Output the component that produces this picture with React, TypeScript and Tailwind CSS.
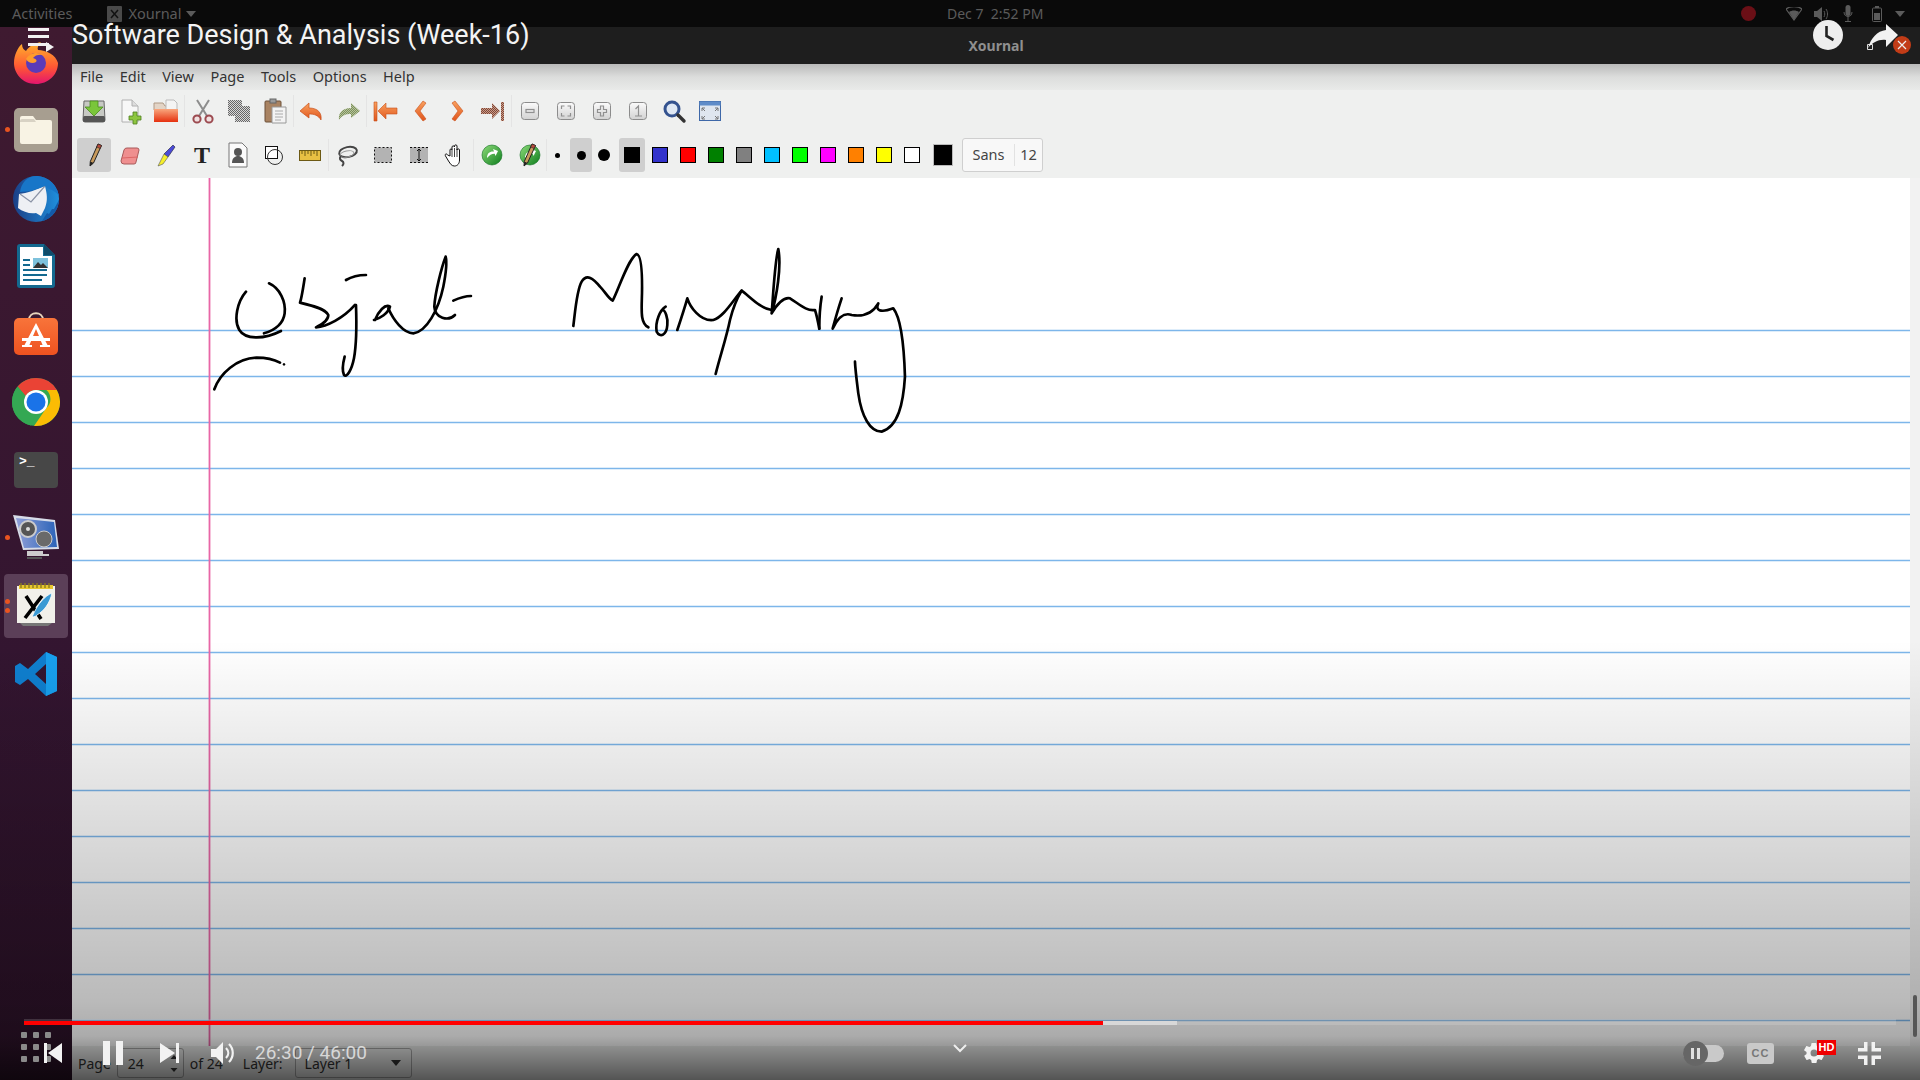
import type { ReactNode } from 'react'

const UI_FONT = 'font-["Noto_Sans",sans-serif]'

// gradient + dither defs shared by all the little svg icons
function Defs() {
  return (
    <svg className="absolute w-0 h-0">
      <defs>
        <pattern id="dGray" width="2" height="2" patternUnits="userSpaceOnUse">
          <rect width="2" height="2" fill="#d8d8d8" />
          <rect width="1" height="1" fill="#666" />
          <rect x="1" y="1" width="1" height="1" fill="#666" />
        </pattern>
        <pattern id="dOlive" width="2" height="2" patternUnits="userSpaceOnUse">
          <rect width="2" height="2" fill="#b5c49a" />
          <rect width="1" height="1" fill="#7d8f5d" />
          <rect x="1" y="1" width="1" height="1" fill="#7d8f5d" />
        </pattern>
        <pattern id="dBrown" width="2" height="2" patternUnits="userSpaceOnUse">
          <rect width="2" height="2" fill="#d09a85" />
          <rect width="1" height="1" fill="#7a4a3c" />
          <rect x="1" y="1" width="1" height="1" fill="#7a4a3c" />
        </pattern>
        <linearGradient id="orange" x1="0" y1="0" x2="0" y2="1">
          <stop offset="0" stopColor="#f9a15e" />
          <stop offset="1" stopColor="#e0541c" />
        </linearGradient>
        <linearGradient id="folder" x1="0" y1="0" x2="0" y2="1">
          <stop offset="0" stopColor="#f9a77e" />
          <stop offset="1" stopColor="#e5300f" />
        </linearGradient>
        <linearGradient id="btn" x1="0" y1="0" x2="0" y2="1">
          <stop offset="0" stopColor="#fbfbfb" />
          <stop offset="1" stopColor="#d2d2d2" />
        </linearGradient>
        <linearGradient id="green" x1="0" y1="0" x2="1" y2="1">
          <stop offset="0" stopColor="#8fdc7a" />
          <stop offset="1" stopColor="#0c7d1c" />
        </linearGradient>
        <linearGradient id="ff" x1="0" y1="0" x2="0" y2="1">
          <stop offset="0" stopColor="#ffb52c" />
          <stop offset="0.6" stopColor="#ff5634" />
          <stop offset="1" stopColor="#e3156e" />
        </linearGradient>
        <linearGradient id="tb" x1="0" y1="0" x2="1" y2="0">
          <stop offset="0" stopColor="#1b3f86" />
          <stop offset="1" stopColor="#1f8fdc" />
        </linearGradient>
        <linearGradient id="store" x1="0" y1="0" x2="0" y2="1">
          <stop offset="0" stopColor="#f8743a" />
          <stop offset="1" stopColor="#ee5220" />
        </linearGradient>
        <linearGradient id="mon" x1="0" y1="0" x2="1" y2="0">
          <stop offset="0" stopColor="#8f9fd8" />
          <stop offset="1" stopColor="#2b63b8" />
        </linearGradient>
      </defs>
    </svg>
  )
}

const Ico = ({ children }: { children: ReactNode }) => (
  <svg width="28" height="28" viewBox="0 0 28 28">
    {children}
  </svg>
)

const ZoomBtn = ({ children }: { children: ReactNode }) => (
  <Ico>
    <rect x="5.500" y="5.500" width="17" height="17" rx="3" fill="url(#btn)" stroke="#8c8c8c" />
    <g fill="none" stroke="#909090" strokeWidth="1.2">{children}</g>
  </Ico>
)

type Tool = { key: string; icon: ReactNode; sep?: boolean }

const ROW_ONE: Tool[] = [
  {
    key: 'save',
    icon: (
      <Ico>
        <path d="M4 4h20l1 19a2 2 0 0 1-2 2H5a2 2 0 0 1-2-2z" fill="#c7c9c4" stroke="#666" />
        <rect x="3" y="19" width="22" height="6" rx="1.5" fill="#555" />
        <path d="M10 4h8v6h5l-9 9-9-9h5z" fill="#7ac63a" stroke="#4a8a1e" strokeWidth=".8" />
      </Ico>
    ),
  },
  {
    key: 'new',
    icon: (
      <Ico>
        <path d="M6 3h10l6 6v16H6z" fill="#f7f7f7" stroke="#b0b0b0" />
        <path d="M16 3v6h6" fill="#ddd" stroke="#b0b0b0" />
        <path d="M17 15h4v4h4v4h-4v4h-4v-4h-4v-4h4z" fill="#8dc63f" stroke="#4f7f1f" strokeWidth=".8" />
      </Ico>
    ),
  },
  {
    key: 'open',
    icon: (
      <Ico>
        <path d="M2 6h9l2 3h6v4H2z" fill="#e3d4c6" stroke="#b09a85" />
        <path d="M14 3h8l3 3v8H14z" fill="#f4f4f4" stroke="#bbb" />
        <path d="M2 12h24v13H2z" fill="url(#folder)" />
      </Ico>
    ),
  },
  {
    key: 'cut',
    sep: true,
    icon: (
      <Ico>
        <g fill="none" stroke="#8d8d8d" strokeWidth="2">
          <path d="M8 3l10 16M20 3L10 19" />
        </g>
        <g fill="#f0e0e0" stroke="#9c4a50" strokeWidth="2">
          <circle cx="8" cy="22" r="3.600" />
          <circle cx="20" cy="22" r="3.600" />
        </g>
      </Ico>
    ),
  },
  {
    key: 'copy',
    icon: (
      <Ico>
        <rect x="3" y="3" width="14" height="16" fill="url(#dGray)" />
        <rect x="10" y="9" width="15" height="16" fill="url(#dGray)" />
      </Ico>
    ),
  },
  {
    key: 'paste',
    icon: (
      <Ico>
        <rect x="4" y="4" width="16" height="21" rx="1" fill="#a98362" stroke="#6d5138" />
        <rect x="9" y="2" width="6" height="4" fill="#9a9a9a" stroke="#666" />
        <path d="M11 10h14v16H11z" fill="#f3f3f3" stroke="#999" />
        <path d="M14 14h8M14 17h8M14 20h8M14 23h6" stroke="#aaa" />
      </Ico>
    ),
  },
  {
    key: 'undo',
    sep: true,
    icon: (
      <Ico>
        <path d="M11 6L2 14l9 7v-4c5 0 9 1 12 6 1-7-3-12-12-12z" fill="url(#orange)" stroke="#c8501b" strokeWidth=".7" />
      </Ico>
    ),
  },
  {
    key: 'redo',
    icon: (
      <Ico>
        <path d="M17 6l9 8-9 7v-4c-5 0-9 1-12 6-1-7 3-12 12-12z" fill="url(#dOlive)" />
      </Ico>
    ),
  },
  {
    key: 'first',
    sep: true,
    icon: (
      <Ico>
        <path d="M3 5h3v19H3zM15 6l-8 8 8 8v-5h11v-6H15z" fill="url(#orange)" stroke="#c8501b" strokeWidth=".6" />
      </Ico>
    ),
  },
  {
    key: 'prev',
    icon: (
      <Ico>
        <path d="M16 4l-8 10 8 10 3-2-6-8 6-8z" fill="url(#orange)" stroke="#c8501b" strokeWidth=".6" />
      </Ico>
    ),
  },
  {
    key: 'next',
    icon: (
      <Ico>
        <path d="M12 4l8 10-8 10-3-2 6-8-6-8z" fill="url(#orange)" stroke="#c8501b" strokeWidth=".6" />
      </Ico>
    ),
  },
  {
    key: 'last',
    icon: (
      <Ico>
        <path d="M25 5h-3v19h3zM13 6l8 8-8 8v-5H2v-6h11z" fill="url(#dBrown)" />
      </Ico>
    ),
  },
  {
    key: 'zoomOut',
    sep: true,
    icon: (
      <ZoomBtn>
        <rect x="10" y="12.500" width="8" height="3" />
      </ZoomBtn>
    ),
  },
  {
    key: 'fit',
    icon: (
      <ZoomBtn>
        <path d="M12.500 9h-3v3M15.500 9h3v3M12.500 19h-3v-3M15.500 19h3v-3" />
      </ZoomBtn>
    ),
  },
  {
    key: 'zoomIn',
    icon: (
      <ZoomBtn>
        <path d="M12.500 9h3v3.500h3v3h-3V19h-3v-3.500h-3v-3h3z" />
      </ZoomBtn>
    ),
  },
  {
    key: 'one',
    icon: (
      <ZoomBtn>
        <path d="M11.500 12l3-3v10M11 19h7" />
      </ZoomBtn>
    ),
  },
  {
    key: 'find',
    icon: (
      <Ico>
        <circle cx="12" cy="12" r="7" fill="#dfe8f4" stroke="#34538f" strokeWidth="3" />
        <path d="M18 18l6 6" stroke="#333" strokeWidth="3.400" strokeLinecap="round" />
      </Ico>
    ),
  },
  {
    key: 'full',
    icon: (
      <Ico>
        <rect x="3.500" y="4.500" width="21" height="19" fill="#dfe6ef" stroke="#3e68a8" />
        <rect x="3.500" y="4.500" width="21" height="4" fill="#5f8cc8" />
        <path d="M6 11l3 3M6 11h3M6 11v3M22 11l-3 3M22 11h-3M22 11v3M6 22l3-3M6 22h3M6 22v-3M22 22l-3-3M22 22h-3M22 22v-3" stroke="#777" fill="none" />
      </Ico>
    ),
  },
]

const Pencil = () => (
  <g>
    <path d="M18 3l3.500 1.500-8 17.500-3.500 3 .3-4.500z" fill="#c89a5c" stroke="#222" />
    <path d="M18 3l3.500 1.500-1.300 3-3.500-1.500z" fill="#b84a3c" stroke="#222" strokeWidth=".6" />
    <path d="M10 25l.3-4.500 3.200 1.500z" fill="#222" />
  </g>
)

const GreenBall = ({ cx }: { cx: number }) => (
  <g transform={`translate(${cx - 10} 4)`}>
    <circle cx="10" cy="10" r="10" fill="url(#green)" stroke="#0c6d1c" strokeWidth=".6" />
    <path d="M5 13c0-5 3-7 7-6.500l-1-2.500 5 2-2.500 5-.8-2.300C10 8.500 7.500 10 5 13z" fill="#fff" />
  </g>
)

const ROW_TWO: { key: string; icon: ReactNode; sep?: boolean; on?: boolean }[] = [
  { key: 'pen', on: true, icon: <Ico><Pencil /></Ico> },
  {
    key: 'eraser',
    icon: (
      <Ico>
        <path d="M11 7h10a2 2 0 0 1 2 2l-3 12a2 2 0 0 1-2 2H8a3 3 0 0 1-3-3l3-11a3 3 0 0 1 3-2z" fill="#ef8f8f" stroke="#a85a5a" />
        <path d="M6 17l16-1" stroke="#d66" />
      </Ico>
    ),
  },
  {
    key: 'hi',
    icon: (
      <Ico>
        <path d="M21 4l2 2-7 10-4-3z" fill="#4a4ad8" stroke="#223" strokeWidth=".6" />
        <path d="M12 13l4 3-5 7-5 2z" fill="#f5ee2a" stroke="#555" strokeWidth=".6" />
      </Ico>
    ),
  },
  {
    key: 'text',
    icon: <span className='text-[24px] leading-none font-bold text-[#222] font-["Liberation_Serif",serif]'>T</span>,
  },
  {
    key: 'image',
    icon: (
      <Ico>
        <path d="M5 2h13l5 5v19H5z" fill="#fbfbfb" stroke="#777" />
        <circle cx="14" cy="11" r="4" fill="#555" />
        <path d="M8 22c0-5 3-7 6-7s6 2 6 7z" fill="#555" />
      </Ico>
    ),
  },
  {
    key: 'shape',
    icon: (
      <Ico>
        <rect x="5.500" y="5.500" width="12" height="12" fill="#fff" stroke="#111" />
        <circle cx="15" cy="16" r="7.500" fill="none" stroke="#333" />
      </Ico>
    ),
  },
  {
    key: 'ruler',
    icon: (
      <Ico>
        <rect x="3.500" y="9.500" width="21" height="10" fill="#e8c043" stroke="#6d5a15" />
        <path d="M6 10v3M9 10v5M12 10v3M15 10v5M18 10v3M21 10v5" stroke="#6d5a15" />
      </Ico>
    ),
  },
  {
    key: 'lasso',
    sep: true,
    icon: (
      <Ico>
        <ellipse cx="15" cy="11" rx="9" ry="5" fill="none" stroke="#444" strokeWidth="2" transform="rotate(-12 15 11)" />
        <ellipse cx="14" cy="13" rx="7" ry="3" fill="none" stroke="#999" strokeWidth="1" transform="rotate(-12 14 13)" />
        <path d="M8 15c-2 2-1 4 1 5 2 1 2 3 0 5" fill="none" stroke="#444" strokeWidth="2" />
      </Ico>
    ),
  },
  {
    key: 'rect',
    icon: (
      <Ico>
        <rect x="5.500" y="6.500" width="17" height="15" fill="#b3b3b3" stroke="#111" strokeDasharray="2 2" />
      </Ico>
    ),
  },
  {
    key: 'vspace',
    icon: (
      <Ico>
        <rect x="5" y="6" width="18" height="16" fill="#b3b3b3" />
        <path d="M5 6.500h18M5 21.500h18" stroke="#111" strokeDasharray="2 2" />
        <path d="M14 8v12M12 10l2-2 2 2M12 18l2 2 2-2" fill="none" stroke="#111" />
      </Ico>
    ),
  },
  {
    key: 'hand',
    icon: (
      <Ico>
        <path d="M9 15V9c0-1.500 2-1.500 2 0V6c0-1.500 2.500-1.500 2.500 0V5c0-1.500 2.500-1.500 2.500 0v4c0-1.500 2.500-1.500 2.500 0v10c0 3.500-2 6-5 6s-4-2-6-5l-3-5c-1-2 1-3 2-1z" fill="#fff" stroke="#111" />
        <path d="M11 9v7M13.500 7v9M16 8v8" stroke="#111" strokeWidth=".8" />
      </Ico>
    ),
  },
  {
    key: 'default',
    sep: true,
    icon: <Ico><GreenBall cx={14} /></Ico>,
  },
  {
    key: 'defaultPen',
    icon: (
      <Ico>
        <GreenBall cx={16} />
        <Pencil />
      </Ico>
    ),
  },
]

const COLORS = [
  'bg-[#3333cc]',
  'bg-[#ff0000]',
  'bg-[#008000]',
  'bg-[#808080]',
  'bg-[#00c0ff]',
  'bg-[#00ff00]',
  'bg-[#ff00ff]',
  'bg-[#ff8000]',
  'bg-[#ffff00]',
  'bg-[#ffffff]',
]

const MENU = ['File', 'Edit', 'View', 'Page', 'Tools', 'Options', 'Help']

function ToolBtn({ on, children }: { on?: boolean; children: ReactNode }) {
  return (
    <div className={`h-[34px] flex items-center justify-center rounded-[3px] ${on ? 'w-[34px] mr-[1px] bg-[#cfcfcf]' : 'w-[36px]'}`}>
      {children}
    </div>
  )
}

const Sep = () => <div className="w-[1px] h-[32px] bg-[#e4e4e4]" />

function Toolbars() {
  return (
    <div className="bg-[#eff0ef]">
      <div className="h-[42px] flex items-center pl-[4px]">
        {ROW_ONE.map((t) => (
          <div key={t.key} className="flex items-center">
            {t.sep && <Sep />}
            <ToolBtn>{t.icon}</ToolBtn>
          </div>
        ))}
      </div>
      <div className="h-[46px] flex items-center pl-[5px]">
        {ROW_TWO.map((t) => (
          <div key={t.key} className="flex items-center">
            {t.sep && <Sep />}
            <ToolBtn on={t.on}>{t.icon}</ToolBtn>
          </div>
        ))}
        <Sep />
        <div className="w-[20px] mr-[3px] h-[34px] flex items-center justify-center">
          <div className="w-[5px] h-[5px] rounded-full bg-black" />
        </div>
        <div className="w-[22px] h-[34px] flex items-center justify-center rounded-[3px] bg-[#cfcfcf]">
          <div className="w-[9px] h-[9px] rounded-full bg-black" />
        </div>
        <div className="w-[24px] h-[34px] flex items-center justify-center">
          <div className="w-[12px] h-[12px] rounded-full bg-black" />
        </div>
        <div className="ml-[3px] w-[26px] h-[34px] flex items-center justify-center rounded-[3px] bg-[#cfcfcf]">
          <div className="w-[16px] h-[16px] bg-black" />
        </div>
        <div className="ml-[7px] flex gap-[12px]">
          {COLORS.map((c) => (
            <div key={c} className={`w-[16px] h-[16px] border border-black ${c}`} />
          ))}
        </div>
        <div className="ml-[13px] w-[20px] h-[22px] bg-black border border-[#bbb]" />
        <div className='ml-[9px] w-[81px] h-[34px] flex items-center bg-[#f8f8f8] border border-[#cfcfcf] rounded-[3px] text-[14.500px] text-[#444] font-["Noto_Sans",sans-serif]'>
          <span className="w-[51px] text-center">Sans</span>
          <span className="flex-1 text-center border-l border-[#e2e2e2]">12</span>
        </div>
      </div>
    </div>
  )
}

const LINE_Y = Array.from({ length: 17 }, (_, i) => 330 + i * 46)

function Paper() {
  return (
    <svg className="block w-full h-full bg-white" viewBox="72 178 1838 868" preserveAspectRatio="xMinYMin slice">
      {LINE_Y.map((y) => (
        <line key={y} x1="72" x2="1910" y1={y + 0.5} y2={y + 0.5} stroke="#7db6ea" strokeWidth="1.300" />
      ))}
      <line x1="209.500" x2="209.500" y1="178" y2="1046" stroke="#e866a6" strokeWidth="1.800" />
      <g fill="none" stroke="#000" strokeWidth="8" strokeLinecap="round" strokeLinejoin="round" transform="translate(200 230) scale(.3333)">
        <path d="M138 185C112 215 100 270 118 300C135 328 190 330 243 303" />
        <path d="M207 160C240 175 258 215 254 250C250 280 225 300 192 310" />
        <path d="M314 145C310 170 305 205 300 218C330 225 375 235 385 255C385 275 360 285 348 292C380 290 430 265 465 225" />
        <path d="M438 150C455 140 480 135 498 135" />
        <path d="M468 225C470 280 470 340 462 385C455 420 440 445 432 435C425 420 430 395 434 380" />
        <path d="M522 270C540 265 565 250 570 230C555 220 535 245 525 270" />
        <path d="M565 235C580 270 610 310 640 310C680 305 715 240 730 170C738 130 742 100 737 80C725 110 705 190 703 230C705 265 745 275 765 255" />
        <path d="M760 212C775 205 795 198 813 198" />
        <path d="M43 478C60 430 110 385 170 383C195 383 225 390 240 398" />
        <path d="M252 403l.1 .1" />
      </g>
      <g fill="none" stroke="#000" strokeWidth="8" strokeLinecap="round" strokeLinejoin="round" transform="translate(550 230) scale(.3333)">
        <path d="M70 288C75 250 80 180 95 155C110 130 130 145 150 170C165 185 175 205 188 212C205 180 235 85 260 72C275 75 277 130 276 190C275 240 270 280 295 292" />
        <path d="M347 230C330 240 315 275 320 305C330 325 350 315 352 285C355 265 345 240 338 240" />
        <path d="M382 300C392 270 405 230 412 205C420 230 450 275 490 270C520 262 550 210 575 182C600 200 630 235 665 240" />
        <path d="M497 432C510 380 530 320 540 270C545 250 555 215 575 182" />
        <path d="M665 250C680 200 695 110 685 57C675 90 670 190 665 250C680 225 700 200 720 205C745 220 770 245 795 240C800 255 805 280 808 296" />
        <path d="M815 200C810 230 808 260 808 296" />
        <path d="M875 205C865 235 855 270 848 296C860 270 880 245 905 255C935 260 965 255 985 220C975 240 990 250 1030 235C1050 260 1062 340 1065 440C1060 520 1045 590 995 605C960 605 935 560 925 490C920 450 916 420 915 395" />
      </g>
    </svg>
  )
}

function StatusBar() {
  return (
    <div className={`h-[34px] shrink-0 flex items-center bg-[#eff0ef] text-[14px] text-[#333] ${UI_FONT}`}>
      <span className="ml-[6px]">Page</span>
      <div className="ml-[6px] w-[67px] h-[30px] flex items-center justify-between pl-[10px] pr-[4px] border border-[#aaa] rounded-[3px]">
        <span>24</span>
        <svg width="10" height="26" viewBox="0 0 10 26">
          <path d="M5 5l3.500 4h-7zM1.500 18h7L5 22z" fill="#333" />
        </svg>
      </div>
      <span className="ml-[6px]">of 24</span>
      <span className="ml-[20px]">Layer:</span>
      <div className="ml-[12px] w-[117px] h-[30px] flex items-center justify-between pl-[9px] pr-[10px] border border-[#aaa] rounded-[3px]">
        <span>Layer 1</span>
        <svg width="10" height="6" viewBox="0 0 10 6">
          <path d="M0 0h10L5 6z" fill="#333" />
        </svg>
      </div>
    </div>
  )
}

const DOCK: { key: string; dots?: number; on?: boolean; icon: ReactNode }[] = [
  {
    key: 'firefox',
    icon: (
      <svg width="46" height="46" viewBox="0 0 46 46">
        <path d="M23 45C9 45 1 34 1 24 1 16 5 8 9 5c0 4 2 6 4 7 3-5 9-8 15-9-3 3-4 6-3 8 8 0 18 5 20 13 0 12-10 21-22 21z" fill="url(#ff)" />
        <circle cx="23" cy="24" r="10" fill="#5b3bb8" />
        <path d="M13 20c3-6 11-8 18-4 -5-1-9 0-11 3 4 1 4 3 3 4-3 2-8 1-10-3z" fill="#ff9c2b" />
      </svg>
    ),
  },
  {
    key: 'files',
    dots: 1,
    icon: (
      <div className="w-[44px] h-[44px] rounded-[5px] bg-[#a79e90] flex items-center justify-center">
        <svg width="32" height="28" viewBox="0 0 32 28">
          <path d="M2 0h11l3 4h14a2 2 0 0 1 2 2v20a2 2 0 0 1-2 2H2a2 2 0 0 1-2-2V2a2 2 0 0 1 2-2z" fill="#f8f3e4" />
          <path d="M0 5a2 2 0 0 1 2-2h12l2 3H0z" fill="#d8d2c4" />
        </svg>
      </div>
    ),
  },
  {
    key: 'thunderbird',
    icon: (
      <svg width="48" height="48" viewBox="0 0 48 48">
        <circle cx="24" cy="25" r="23" fill="url(#tb)" />
        <path d="M7 20c8-1 17-4 26-8 2 8 3 14 0 22l-4 8-5-3c-6 1-13-1-18-5z" fill="#eef0f4" />
        <path d="M8 20l11 8 14-16" fill="none" stroke="#8b93a6" strokeWidth="1.200" />
        <path d="M8 18C9 9 16 1 26 2c10 1 19 9 21 20-3-4-6-6-10-7l-4-3C25 15 16 18 8 18z" fill="#1876c8" />
        <path d="M47 26c0 9-7 19-17 21l5-8 2 1 3-5 2 0z" fill="#135aa8" />
      </svg>
    ),
  },
  {
    key: 'writer',
    icon: (
      <svg width="38" height="44" viewBox="0 0 38 44">
        <path d="M3 0h24l11 11v30a3 3 0 0 1-3 3H3a3 3 0 0 1-3-3V3a3 3 0 0 1 3-3z" fill="#13698f" />
        <path d="M3 3h23v9h9v29H3z" fill="#fff" />
        <path d="M27 0l11 11H27z" fill="#0f4c6a" />
        <path d="M6 15h7v2H6zM6 20h7v2H6zM6 25h24v2H6zM6 30h24v2H6zM6 35h19v2H6z" fill="#13698f" />
        <rect x="16" y="14" width="15" height="10" fill="#7ec2dc" />
        <path d="M16 24l5-6 3 3 2-2 5 5z" fill="#333" />
      </svg>
    ),
  },
  {
    key: 'store',
    icon: (
      <svg width="44" height="44" viewBox="0 0 44 44">
        <path d="M15 8c0-9 14-9 14 0" fill="none" stroke="#e8d5bd" strokeWidth="2" />
        <rect y="6" width="44" height="37" rx="5" fill="url(#store)" />
        <path d="M22 11L10 34h5l2.500-6h9l2.500 6h5zM19 24l3-7 3 7z" fill="#fff" />
        <path d="M8 26h28v3H8zM8 33h10v2H8zM26 33h10v2H26z" fill="#fff" />
      </svg>
    ),
  },
  {
    key: 'chrome',
    icon: (
      <svg width="48" height="48" viewBox="0 0 48 48">
        <circle cx="24" cy="24" r="24" fill="#34a853" />
        <path d="M24 0a24 24 0 0 1 20.800 12H24a12 12 0 0 0-10.400 6L5.600 8.600A24 24 0 0 1 24 0z" fill="#ea4335" />
        <path d="M5.600 8.600L13.600 18 24 36l-5.200 11.400A24 24 0 0 1 5.600 8.600z" fill="#34a853" />
        <path d="M44.800 12A24 24 0 0 1 22 47.900L34.400 30a12 12 0 0 0 0-18z" fill="#fbbc04" />
        <circle cx="24" cy="24" r="12" fill="#fff" />
        <circle cx="24" cy="24" r="9.500" fill="#1a73e8" />
      </svg>
    ),
  },
  {
    key: 'terminal',
    icon: (
      <div className="w-[44px] h-[36px] rounded-[4px] bg-[#474747] relative">
        <span className='absolute left-[5px] top-[1px] text-[13px] leading-[18px] font-bold text-white font-["Liberation_Mono",monospace]'>&gt;_</span>
      </div>
    ),
  },
  {
    key: 'video',
    dots: 1,
    icon: (
      <svg width="46" height="46" viewBox="0 0 46 46">
        <path d="M0 0l42 5 4 29-36 1z" fill="#d7dce8" />
        <path d="M3 3l38 4 3 25-33 1z" fill="url(#mon)" />
        <circle cx="15" cy="14" r="8" fill="#555" stroke="#ccc" strokeWidth="2" />
        <circle cx="15" cy="14" r="2" fill="#ddd" />
        <circle cx="31" cy="24" r="8" fill="#6a6a6a" stroke="#ccc" />
        <path d="M14 36h16v3h6v2H14z" fill="#ccc" />
        <rect x="14" y="42" width="15" height="2" fill="#555" />
      </svg>
    ),
  },
  {
    key: 'xournal',
    dots: 2,
    on: true,
    icon: (
      <svg width="38" height="46" viewBox="0 0 38 46">
        <rect x="0" y="3" width="38" height="37" fill="#f1f0ea" />
        <rect x="2" y="2" width="34" height="4" fill="#e7c52f" />
        <path d="M4 0v5M8 0v5M12 0v5M16 0v5M20 0v5M24 0v5M28 0v5M32 0v5" stroke="#8a7a20" strokeWidth="1.400" />
        <path d="M3 40h32l-4 3H6z" fill="#777" />
        <path d="M9 13l15 23M25 13L8 35" stroke="#000" strokeWidth="3.600" />
        <path d="M35 10c-7 3-14 10-20 24 3 0 4-1 5-2 7-4 13-12 15-22z" fill="#3a9ad4" stroke="#fff" strokeWidth=".8" />
      </svg>
    ),
  },
  {
    key: 'vscode',
    icon: (
      <svg width="42" height="44" viewBox="0 0 42 44">
        <path d="M31 0l11 5v34l-11 5-18-17-8 6-5-3v-16l5-3 8 6zM31 12L20 22l11 10z" fill="#0f7fcf" />
        <path d="M31 0l11 5v34l-11 5z" fill="#18a0ee" />
      </svg>
    ),
  },
]

function Dock() {
  return (
    <div className="w-[72px] shrink-0 pt-[1px] bg-[linear-gradient(to_bottom,#3f1a30,#331530_60%,#2c1228)]">
      {DOCK.map((item) => (
        <div key={item.key} className="h-[68px] flex items-center justify-center relative">
          {item.on && <div className="absolute left-[4px] right-[4px] top-[2px] bottom-[2px] rounded-[4px] bg-[#5b3f58]" />}
          {item.dots === 1 && <div className="absolute left-[5px] top-[31px] w-[5px] h-[5px] rounded-full bg-[#e95420]" />}
          {item.dots === 2 && (
            <div className="absolute left-[5px] top-[27px] flex flex-col gap-[4px]">
              <div className="w-[5px] h-[5px] rounded-full bg-[#e95420]" />
              <div className="w-[5px] h-[5px] rounded-full bg-[#e95420]" />
            </div>
          )}
          <div className="relative">{item.icon}</div>
        </div>
      ))}
    </div>
  )
}

function TopBar() {
  return (
    <div className={`h-[27px] shrink-0 bg-[#0a0a0a] flex items-center text-[14.500px] text-[#5b5b5b] relative ${UI_FONT}`}>
      <span className="ml-[12px]">Activities</span>
      <svg className="ml-[35px]" width="15" height="16" viewBox="0 0 15 16">
        <rect width="15" height="16" rx="1" fill="#4a4a4a" />
        <path d="M4 4l7 8M11 4l-7 8" stroke="#111" strokeWidth="1.500" />
      </svg>
      <span className="ml-[6px]">Xournal</span>
      <svg className="ml-[5px]" width="10" height="6" viewBox="0 0 10 6">
        <path d="M0 0h10L5 6z" fill="#5b5b5b" />
      </svg>
      <span className="absolute left-[947px] top-[3px] text-[14px]">Dec 7&nbsp;&nbsp;2:52 PM</span>
      <div className="ml-auto mr-[15px] flex items-center">
        <div className="w-[15px] h-[15px] rounded-full bg-[#6b0f16] mr-[30px]" />
        <svg className="mr-[12px]" width="16" height="14" viewBox="0 0 16 14">
          <path d="M0 2C4-1 12-1 16 2L8 13z" fill="none" stroke="#5b5b5b" strokeWidth="1.200" />
          <path d="M3 5c3-2 7-2 10 0L8 13z" fill="#5b5b5b" />
        </svg>
        <svg className="mr-[14px]" width="15" height="14" viewBox="0 0 15 14">
          <path d="M0 4h3l5-4v14l-5-4H0z" fill="#5b5b5b" />
          <path d="M10 4c1 2 1 4 0 6M12 2c2 3 2 7 0 10" fill="none" stroke="#5b5b5b" />
        </svg>
        <svg className="mr-[19px]" width="10" height="17" viewBox="0 0 10 17">
          <rect x="2.500" width="5" height="11" rx="2.500" fill="#5b5b5b" />
          <path d="M1 7c0 6 8 6 8 0M5 12v4M2 16.500h6" fill="none" stroke="#5b5b5b" />
        </svg>
        <svg className="mr-[13px]" width="10" height="16" viewBox="0 0 10 16">
          <path d="M3 0h4v2H3z" fill="#5b5b5b" />
          <rect x=".5" y="2" width="9" height="13.500" rx="1" fill="none" stroke="#5b5b5b" />
          <rect x="2" y="7" width="6" height="7" fill="#5b5b5b" />
        </svg>
        <svg width="10" height="6" viewBox="0 0 10 6">
          <path d="M0 0h10L5 6z" fill="#5b5b5b" />
        </svg>
      </div>
    </div>
  )
}

function PlayerOverlay() {
  return (
    <>
      <h1 className='absolute left-[72px] top-[15px] text-[27px] leading-[40px] text-[#f4f4f4] whitespace-nowrap font-["Roboto",sans-serif]'>
        Software Design &amp; Analysis (Week-16)
      </h1>

      <svg className="absolute left-[1813px] top-[20px]" width="30" height="30" viewBox="0 0 30 30">
        <circle cx="15" cy="15" r="15" fill="#eee" />
        <path d="M13.500 6v10l7 4" fill="none" stroke="#222" strokeWidth="2.600" />
      </svg>
      <svg className="absolute left-[1864px] top-[23px]" width="36" height="28" viewBox="0 0 36 28">
        <path d="M3.500 21.500h5v5h-5z" fill="none" stroke="#ddd" />
        <path d="M22 1l12 11-12 12v-7C15 16 9 19 4 25 7 15 13 8 22 7z" fill="#f2f2f2" />
      </svg>
      <div className="absolute left-[1893px] top-[36px] w-[18px] h-[18px] rounded-full bg-[#c23c17] flex items-center justify-center">
        <svg width="10" height="10" viewBox="0 0 10 10">
          <path d="M1 1l8 8M9 1L1 9" stroke="#eee" strokeWidth="1.200" />
        </svg>
      </div>
      <svg className="absolute left-[28px] top-[28px]" width="27" height="25" viewBox="0 0 27 25">
        <path d="M0 0h21v3H0zM0 7h21v3H0zM0 15h21v3H0z" fill="#f2f2f2" />
        <path d="M18 14l8 5-8 5z" fill="#f2f2f2" />
      </svg>

      {/* scrim */}
      <div className="absolute left-0 right-0 top-[640px] bottom-0 bg-[linear-gradient(to_bottom,rgba(0,0,0,0)_0%,rgba(0,0,0,0.27)_82%,rgba(0,0,0,0.33)_90%,rgba(0,0,0,0.65)_100%)]" />

      {/* progress */}
      <div className="absolute left-[24px] top-[1019px] w-[1872px] h-[6px] bg-white/15" />
      <div className="absolute left-[24px] top-[1021px] w-[1153px] h-[4px] bg-[#d8d8d8]" />
      <div className="absolute left-[24px] top-[1021px] w-[1079px] h-[4px] bg-[#ff0000]" />
      <div className="absolute left-[1913px] top-[995px] w-[4px] h-[42px] rounded-[2px] bg-[#555]" />

      <div className="absolute left-[21px] top-[1032px] grid grid-cols-3 gap-[6px]">
        {Array.from({ length: 9 }, (_, i) => (
          <div key={i} className="w-[6px] h-[6px] rounded-[1px] bg-[#8a8a8a]" />
        ))}
      </div>

      {/* controls */}
      <div className="absolute left-[44px] right-[39px] top-[1040px] h-[26px] flex items-center">
        <svg width="18" height="20" viewBox="0 0 18 20">
          <path d="M0 0h3v20H0zM18 0v20L4 10z" fill="#f2f2f2" />
        </svg>
        <svg className="ml-[41px]" width="20" height="24" viewBox="0 0 20 24">
          <path d="M0 0h7v24H0zM13 0h7v24h-7z" fill="#f2f2f2" />
        </svg>
        <svg className="ml-[37px]" width="19" height="20" viewBox="0 0 19 20">
          <path d="M0 0l15 10L0 20zM16 0h3v20h-3z" fill="#f2f2f2" />
        </svg>
        <svg className="ml-[32px]" width="23" height="22" viewBox="0 0 23 22">
          <path d="M0 7h5l7-7v22l-7-7H0z" fill="#f2f2f2" />
          <path d="M15 6c3 3 3 7 0 10M18 2c5 5 5 13 0 18" fill="none" stroke="#f2f2f2" strokeWidth="2.200" />
        </svg>
        <span className='ml-[21px] text-[19px] text-white/70 whitespace-nowrap font-["Roboto",sans-serif]'>26:30 / 46:00</span>

        <svg className="absolute left-[909px] top-[4px]" width="14" height="9" viewBox="0 0 14 9">
          <path d="M1 1l6 6 6-6" fill="none" stroke="#eee" strokeWidth="2" />
        </svg>

        <div className="ml-auto flex items-center">
          <div className="relative w-[41px] h-[17px] rounded-full bg-[#c9c9c9] mr-[23px]">
            <div className="absolute left-0 top-[-4px] w-[25px] h-[25px] rounded-full bg-[#666] flex items-center justify-center">
              <div className="w-[9px] h-[11px] border-x-[3px] border-[#e0e0e0]" />
            </div>
          </div>
          <div className='w-[27px] h-[21px] mr-[28px] rounded-[3px] bg-[#c9c9c9] flex items-center justify-center text-[11px] leading-none font-bold tracking-[1px] text-[#777] font-["Liberation_Sans",sans-serif]'>
            CC
          </div>
          <div className="relative w-[24px] h-[24px] mr-[32px]">
            <svg width="24" height="24" viewBox="0 0 24 24">
              <path
                d="M19.400 13c.1-.3.1-.7.1-1s0-.7-.1-1l2.100-1.600c.2-.1.2-.4.1-.6l-2-3.500c-.1-.2-.4-.3-.6-.2l-2.500 1c-.5-.4-1.100-.7-1.700-1l-.4-2.600c0-.3-.2-.5-.5-.5h-4c-.3 0-.5.2-.5.500l-.4 2.600c-.6.3-1.200.6-1.700 1l-2.500-1c-.2-.1-.5 0-.6.2l-2 3.500c-.1.2-.1.5.1.6L4.600 11c-.1.300-.1.700-.1 1s0 .7.1 1l-2.100 1.600c-.2.1-.2.4-.1.6l2 3.500c.1.2.4.3.6.2l2.500-1c.5.4 1.100.7 1.700 1l.4 2.600c0 .3.2.5.5.5h4c.3 0 .5-.2.5-.5l.4-2.600c.6-.3 1.200-.6 1.700-1l2.500 1c.2.1.5 0 .6-.2l2-3.500c.1-.2.1-.5-.1-.6zM12 15.500a3.500 3.500 0 1 1 0-7 3.500 3.500 0 0 1 0 7z"
                fill="#f2f2f2"
              />
            </svg>
            <span className='absolute left-[15px] top-[-1px] w-[19px] h-[15px] bg-[#f00000] text-white text-[11px] leading-[15px] font-bold text-center font-["Liberation_Sans",sans-serif]'>
              HD
            </span>
          </div>
          <svg width="23" height="23" viewBox="0 0 23 23">
            <path d="M6 0h3.500v9.500H0V6h6zM13.500 0H17v6h6v3.500h-9.500zM0 13.500h9.500V23H6v-6H0zM13.500 13.500H23V17h-6v6h-3.500z" fill="#f2f2f2" />
          </svg>
        </div>
      </div>
    </>
  )
}

export default function App() {
  return (
    <div className="relative w-[1920px] h-[1080px] overflow-hidden flex flex-col bg-black">
      <Defs />
      <TopBar />
      <div className="flex-1 flex min-h-0">
        <Dock />
        <div className="flex-1 flex flex-col min-w-0">
          <div className={`h-[37px] shrink-0 bg-[#1e1e1e] flex items-center justify-center text-[14px] font-bold text-[#8f8f8f] ${UI_FONT}`}>
            Xournal
          </div>
          <div className="h-[26px] shrink-0 bg-[linear-gradient(to_bottom,#b9b9b9,#dcdddc_50%,#e9eae9)] flex items-center pl-[8px]">
            {MENU.map((m) => (
              <span key={m} className={`mr-[16.500px] text-[14.500px] text-[#333] ${UI_FONT}`}>
                {m}
              </span>
            ))}
          </div>
          <Toolbars />
          <div className="flex-1 min-h-0 flex">
            <div className="flex-1 min-w-0 overflow-hidden">
              <Paper />
            </div>
            <div className="w-[10px] bg-[#f2f2f2]" />
          </div>
          <StatusBar />
        </div>
      </div>
      <PlayerOverlay />
    </div>
  )
}
